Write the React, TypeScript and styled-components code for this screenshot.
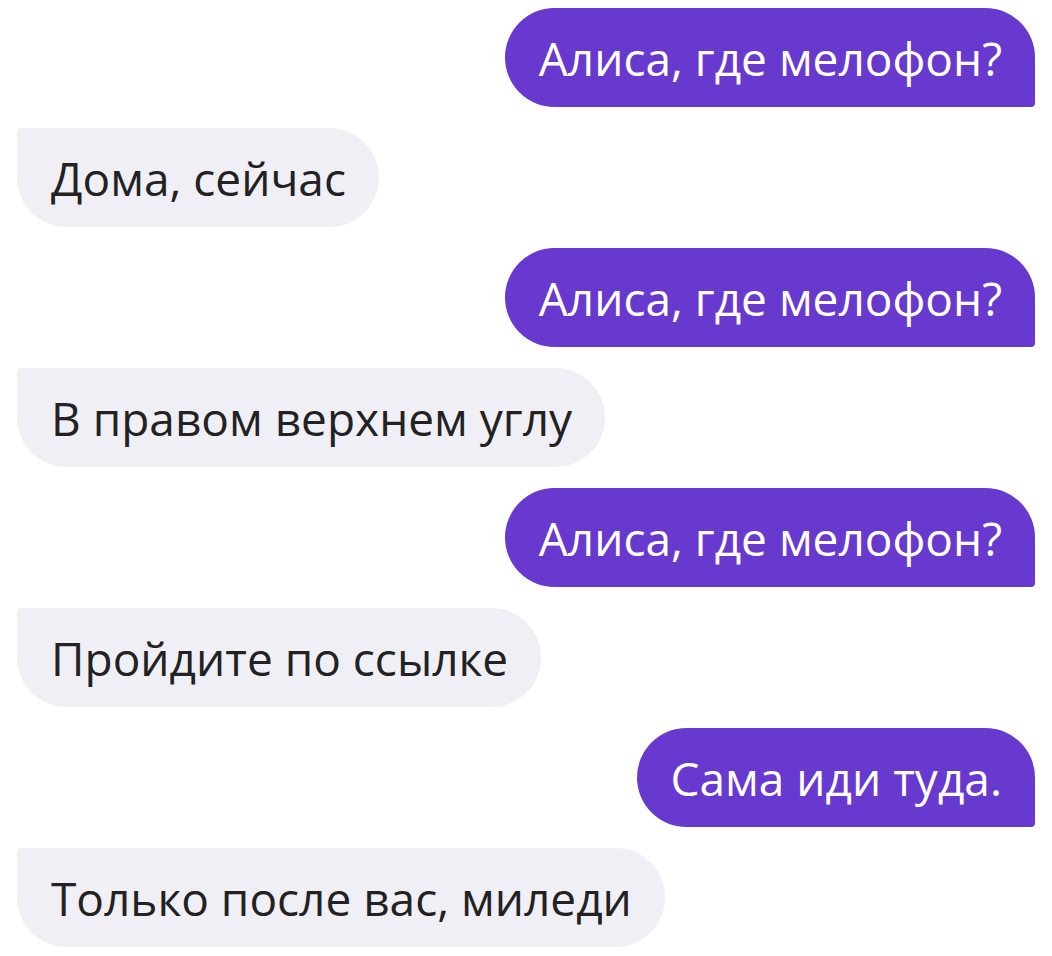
import styled, { createGlobalStyle } from 'styled-components';

const GlobalStyle = createGlobalStyle`
  html, body {
    margin: 0;
    padding: 0;
    background: #ffffff;
  }
`;

const Chat = styled.div`
  display: flex;
  flex-direction: column;
  gap: 21px;
  padding: 8px 17px 8px 17px;
  font-family: 'Open Sans', 'Noto Sans', sans-serif;
`;

const Bubble = styled.div<{ $mine?: boolean }>`
  align-self: ${p => (p.$mine ? 'flex-end' : 'flex-start')};
  height: 99px;
  display: flex;
  align-items: center;
  padding: 0 33px 0 34px;
  box-sizing: border-box;
  font-size: 46px;
  white-space: nowrap;
  background: ${p => (p.$mine ? '#6839cf' : '#f0eff5')};
  color: ${p => (p.$mine ? '#ffffff' : '#222222')};
  border-radius: ${p => (p.$mine ? '50px 50px 4px 50px' : '4px 50px 50px 50px')};
`;

const messages = [
  { mine: true, text: 'Алиса, где мелофон?' },
  { mine: false, text: 'Дома, сейчас' },
  { mine: true, text: 'Алиса, где мелофон?' },
  { mine: false, text: 'В правом верхнем углу' },
  { mine: true, text: 'Алиса, где мелофон?' },
  { mine: false, text: 'Пройдите по ссылке' },
  { mine: true, text: 'Сама иди туда.' },
  { mine: false, text: 'Только после вас, миледи' },
];

const App = () => {
  return (
    <>
      <GlobalStyle />
      <Chat>
        {messages.map((m, i) => (
          <Bubble key={i} $mine={m.mine}>
            {m.text}
          </Bubble>
        ))}
      </Chat>
    </>
  );
};

export default App;
